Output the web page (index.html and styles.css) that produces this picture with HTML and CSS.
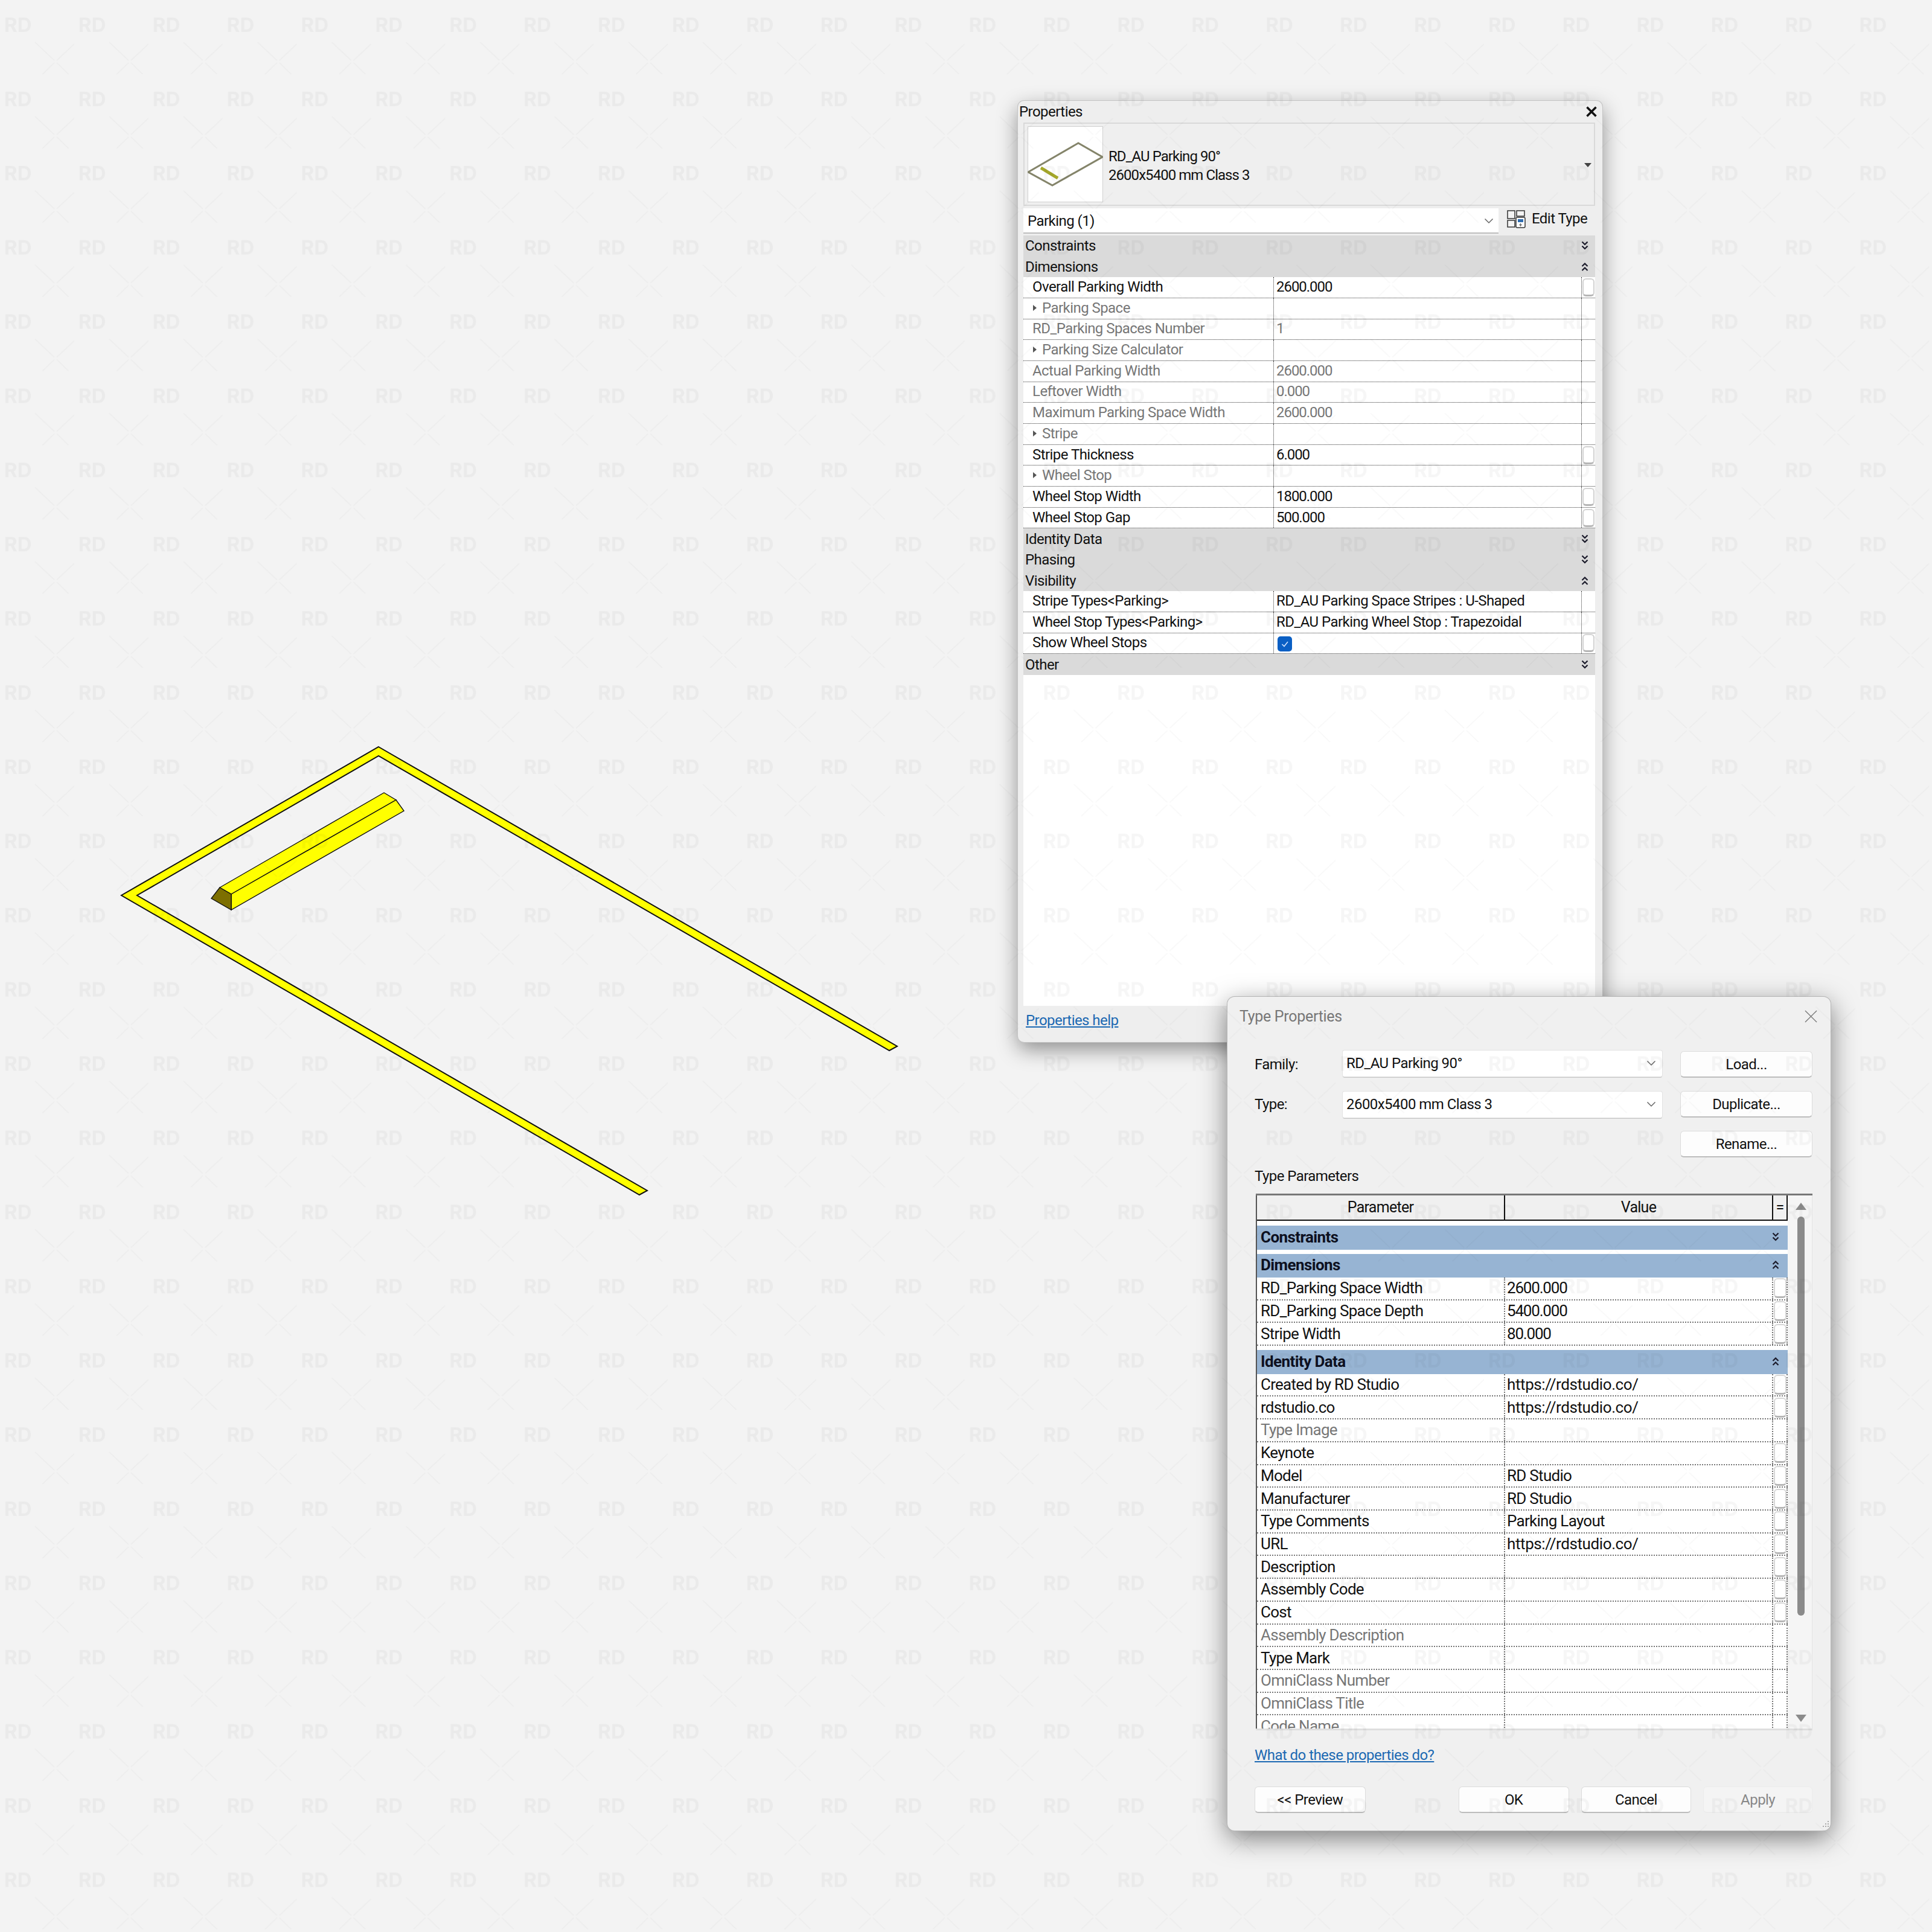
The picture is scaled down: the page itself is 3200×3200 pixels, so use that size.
FILE: index.html
```html
<!DOCTYPE html>
<html lang="en">
<head>
<meta charset="utf-8">
<title>Type Properties</title>
<link rel="stylesheet" href="styles.css">
</head>
<body>
<svg class="defs" width="0" height="0" aria-hidden="true">
  <defs>
    <symbol id="chev-down" viewBox="0 0 12 16"><path d="M1.500 1.500 6 6l4.500-4.500M1.500 8.500 6 13l4.500-4.500" fill="none" stroke="#1a1a2a" stroke-width="2.200"/></symbol>
    <symbol id="chev-up" viewBox="0 0 12 16"><path d="M1.500 7 6 2.500 10.500 7M1.500 14 6 9.500l4.500 4.500" fill="none" stroke="#1a1a2a" stroke-width="2.200"/></symbol>
    <symbol id="combo-arrow" viewBox="0 0 16 10"><path d="M1.500 1.500 8 8l6.500-6.500" fill="none" stroke="#666" stroke-width="1.500"/></symbol>
  </defs>
</svg>

<main class="desktop">
  <svg class="drawing" viewBox="0 0 3200 3200" width="3200" height="3200" aria-hidden="true">
    <polygon class="paint" points="627,1237 1486,1733 1473,1740 627,1252 227,1483 1072,1972 1059,1979 201,1483"/>
    <polygon class="paint thin" points="364,1470 636,1313 656,1325 383,1481"/>
    <polygon class="paint thin" points="383,1481 656,1325 669,1343 383,1507"/>
    <polygon class="paint-end" points="364,1470 383,1481 383,1507 350,1488"/>
  </svg>

  <section class="props">
    <header class="props-title"><span>Properties</span>
      <svg class="props-close" viewBox="0 0 16 16"><path d="M2 2l12 12M14 2 2 14" stroke="#111" stroke-width="2.800" fill="none"/></svg>
    </header>
    <div class="selector">
      <div class="thumb">
        <svg viewBox="0 0 125 126" width="125" height="126">
          <polygon points="1,76 84,28 124,51 41,98" fill="none" stroke="#84846a" stroke-width="3"/>
          <line x1="22" y1="69" x2="50" y2="86" stroke="#a5a82a" stroke-width="5"/>
        </svg>
      </div>
      <div class="selector-name"><span>RD_AU Parking 90°</span><span>2600x5400 mm Class 3</span></div>
      <i class="selector-arrow"></i>
    </div>
    <div class="instance-row">
      <div class="instance-combo"><span>Parking (1)</span><svg class="combo-icon"><use href="#combo-arrow"/></svg></div>
      <div class="edit-type">
        <svg class="edit-icon" viewBox="0 0 31 31">
          <path d="M1 2h12v13H1zM1 18h12v11H1zM16 2h13v9H16z" fill="#f4f4f4" stroke="#333" stroke-width="1.500"/>
          <rect x="15" y="13" width="15" height="17" rx="2" fill="#fff" stroke="#333" stroke-width="1.500"/>
          <rect x="18" y="16" width="9" height="5" fill="#2f6db0"/>
          <path d="M20 25.500h5M22.500 23v5" stroke="#555" stroke-width="1.200"/>
        </svg>
        <span>Edit Type</span>
      </div>
    </div>
    <div class="ptable">
      <div class="phead"><span>Constraints</span><svg class="chev"><use href="#chev-down"/></svg></div>
      <div class="phead"><span>Dimensions</span><svg class="chev"><use href="#chev-up"/></svg></div>
      <div class="prow"><div class="pl">Overall Parking Width</div><div class="pv num">2600.000</div><div class="pb"><i class="pbtn"></i></div></div>
      <div class="prow dim"><div class="pl"><i class="tri"></i>Parking Space</div><div class="pv"></div><div class="pb"></div></div>
      <div class="prow dim"><div class="pl">RD_Parking Spaces Number</div><div class="pv num">1</div><div class="pb"></div></div>
      <div class="prow dim"><div class="pl"><i class="tri"></i>Parking Size Calculator</div><div class="pv"></div><div class="pb"></div></div>
      <div class="prow dim"><div class="pl">Actual Parking Width</div><div class="pv num">2600.000</div><div class="pb"></div></div>
      <div class="prow dim"><div class="pl">Leftover Width</div><div class="pv num">0.000</div><div class="pb"></div></div>
      <div class="prow dim"><div class="pl">Maximum Parking Space Width</div><div class="pv num">2600.000</div><div class="pb"></div></div>
      <div class="prow dim"><div class="pl"><i class="tri"></i>Stripe</div><div class="pv"></div><div class="pb"></div></div>
      <div class="prow"><div class="pl">Stripe Thickness</div><div class="pv num">6.000</div><div class="pb"><i class="pbtn"></i></div></div>
      <div class="prow dim"><div class="pl"><i class="tri"></i>Wheel Stop</div><div class="pv"></div><div class="pb"></div></div>
      <div class="prow"><div class="pl">Wheel Stop Width</div><div class="pv num">1800.000</div><div class="pb"><i class="pbtn"></i></div></div>
      <div class="prow"><div class="pl">Wheel Stop Gap</div><div class="pv num">500.000</div><div class="pb"><i class="pbtn"></i></div></div>
      <div class="phead"><span>Identity Data</span><svg class="chev"><use href="#chev-down"/></svg></div>
      <div class="phead"><span>Phasing</span><svg class="chev"><use href="#chev-down"/></svg></div>
      <div class="phead"><span>Visibility</span><svg class="chev"><use href="#chev-up"/></svg></div>
      <div class="prow"><div class="pl">Stripe Types&lt;Parking&gt;</div><div class="pv">RD_AU Parking Space Stripes : U-Shaped</div><div class="pb"></div></div>
      <div class="prow"><div class="pl">Wheel Stop Types&lt;Parking&gt;</div><div class="pv">RD_AU Parking Wheel Stop : Trapezoidal</div><div class="pb"></div></div>
      <div class="prow"><div class="pl">Show Wheel Stops</div><div class="pv"><i class="check"><svg viewBox="0 0 24 25" width="24" height="25"><path d="M7.500 13l3.500 3.500 6-7.500" fill="none" stroke="#cfe3ff" stroke-width="1.600"/></svg></i></div><div class="pb"><i class="pbtn"></i></div></div>
      <div class="phead"><span>Other</span><svg class="chev"><use href="#chev-down"/></svg></div>
    </div>
    <div class="props-fill"></div>
    <footer class="props-foot"><a class="link">Properties help</a></footer>
  </section>

  <section class="dialog">
    <header class="dlg-title"><span>Type Properties</span>
      <svg class="dlg-close" viewBox="0 0 22 22"><path d="M1 1l20 20M21 1 1 21" stroke="#777" stroke-width="1.400" fill="none"/></svg>
    </header>
    <div class="dlg-body">
      <div class="dlg-form">
        <label class="dlg-label">Family:</label>
        <div class="combo combo-first"><span>RD_AU Parking 90°</span><svg class="combo-icon"><use href="#combo-arrow"/></svg></div>
        <button class="btn">Load...</button>
        <label class="dlg-label">Type:</label>
        <div class="combo"><span>2600x5400 mm Class 3</span><svg class="combo-icon"><use href="#combo-arrow"/></svg></div>
        <button class="btn">Duplicate...</button>
        <button class="btn btn-third">Rename...</button>
      </div>
      <div class="dlg-section">Type Parameters</div>
      <div class="ttable">
        <div class="tgrid">
          <div class="thead"><div>Parameter</div><div>Value</div><div>=</div></div>
          <div class="tgroup g-first"><span>Constraints</span><svg class="chev"><use href="#chev-down"/></svg></div>
          <div class="tgroup g-next"><span>Dimensions</span><svg class="chev"><use href="#chev-up"/></svg></div>
          <div class="trow"><div>RD_Parking Space Width</div><div class="num">2600.000</div><div><i class="tbtn"></i></div></div>
          <div class="trow"><div>RD_Parking Space Depth</div><div class="num">5400.000</div><div><i class="tbtn"></i></div></div>
          <div class="trow"><div>Stripe Width</div><div class="num">80.000</div><div><i class="tbtn"></i></div></div>
          <div class="tgroup g-next"><span>Identity Data</span><svg class="chev"><use href="#chev-up"/></svg></div>
          <div class="trow"><div>Created by RD Studio</div><div class="url">https://rdstudio.co/</div><div><i class="tbtn"></i></div></div>
          <div class="trow"><div>rdstudio.co</div><div class="url">https://rdstudio.co/</div><div><i class="tbtn"></i></div></div>
          <div class="trow dim"><div>Type Image</div><div></div><div></div></div>
          <div class="trow"><div>Keynote</div><div></div><div><i class="tbtn"></i></div></div>
          <div class="trow"><div>Model</div><div>RD Studio</div><div><i class="tbtn"></i></div></div>
          <div class="trow"><div>Manufacturer</div><div>RD Studio</div><div><i class="tbtn"></i></div></div>
          <div class="trow"><div>Type Comments</div><div>Parking Layout</div><div><i class="tbtn"></i></div></div>
          <div class="trow"><div>URL</div><div class="url">https://rdstudio.co/</div><div><i class="tbtn"></i></div></div>
          <div class="trow"><div>Description</div><div></div><div><i class="tbtn"></i></div></div>
          <div class="trow"><div>Assembly Code</div><div></div><div><i class="tbtn"></i></div></div>
          <div class="trow"><div>Cost</div><div></div><div><i class="tbtn"></i></div></div>
          <div class="trow dim"><div>Assembly Description</div><div></div><div></div></div>
          <div class="trow"><div>Type Mark</div><div></div><div></div></div>
          <div class="trow dim"><div>OmniClass Number</div><div></div><div></div></div>
          <div class="trow dim"><div>OmniClass Title</div><div></div><div></div></div>
          <div class="trow dim"><div>Code Name</div><div></div><div></div></div>
        </div>
        <div class="tscroll">
          <i class="arrow-up"></i>
          <i class="thumb-bar"></i>
          <i class="arrow-down"></i>
        </div>
      </div>
      <a class="link dlg-link">What do these properties do?</a>
      <div class="dlg-actions">
        <button class="btn btn-preview">&lt;&lt; Preview</button>
        <button class="btn btn-foot">OK</button>
        <button class="btn btn-foot">Cancel</button>
        <button class="btn btn-foot btn-off">Apply</button>
      </div>
    </div>
    <svg class="grip" viewBox="0 0 14 14"><path d="M11 1h2v2h-2zM7 5h2v2H7zM11 5h2v2h-2zM3 9h2v2H3zM7 9h2v2H7zM11 9h2v2h-2z" fill="#aaa"/></svg>
  </section>

  <svg class="watermark" width="3200" height="3200" aria-hidden="true">
    <defs>
      <pattern id="wm" width="122.900" height="122.900" patternUnits="userSpaceOnUse">
        <text x="7" y="53" class="wm-text">RD</text>
        <path d="M58 70 90 100M94 104l32 31M58 135l32-31M94 100l32-30" class="wm-line"/>
      </pattern>
    </defs>
    <rect width="3200" height="3200" fill="url(#wm)"/>
  </svg>
</main>
</body>
</html>
```
FILE: styles.css
```css
* { box-sizing: border-box; }
html, body { margin: 0; padding: 0; }
body {
  background: #f3f3f3;
  font-family: Roboto, "Noto Sans", "Liberation Sans", sans-serif;
  color: #111;
}
.defs { position: absolute; }
.desktop { position: relative; width: 3200px; height: 3200px; overflow: hidden; background: #f3f3f3; }

/* free canvas */
.drawing { position: absolute; left: 0; top: 0; }
.paint { fill: #ffff00; stroke: #111; stroke-width: 2; stroke-linejoin: miter; }
.paint.thin { stroke-width: 1.400; }
.paint-end { fill: #7d6f00; stroke: #111; stroke-width: 1.400; }
.watermark { position: absolute; left: 0; top: 0; pointer-events: none; }
.wm-text { font-family: Inter, Roboto, sans-serif; font-weight: 700; font-size: 33px; fill: #000; fill-opacity: .035; }
.wm-line { stroke: #000; stroke-opacity: .028; stroke-width: 1.500; fill: none; }

/* Properties palette */
.props {
  position: absolute; left: 1686px; top: 167px; width: 968px; height: 1559px;
  display: flex; flex-direction: column; padding: 0 12px 0 9px;
  background: #eeeeee; border-radius: 10px;
  box-shadow: 0 0 0 1px #c4c4c4, 0 12px 34px rgba(0,0,0,.42);
  font-size: 24px; letter-spacing: -.55px;
}
.props-title { height: 36px; display: flex; align-items: center; justify-content: space-between; margin: 0 -9px 0 -9px; padding: 0 5px 0 2px; }
.props-close { width: 20px; height: 20px; }
.selector {
  height: 138px; display: flex; align-items: center; position: relative;
  background: #efefef; border: 2px solid #d9d9d9; padding-left: 5px;
}
.thumb { width: 125px; height: 126px; background: #fff; border: 1px solid #d0d0d0; flex: none; }
.thumb svg { display: block; margin: -1px; }
.selector-name { display: flex; flex-direction: column; margin-left: 9px; line-height: 31px; margin-top: 6px; letter-spacing: -.95px; }
.selector-arrow { position: absolute; right: 4px; top: 65px; width: 0; height: 0; border: 6px solid transparent; border-top: 7px solid #444; border-bottom: 0; }
.instance-row { display: flex; margin-top: 4px; height: 44px; }
.instance-combo {
  width: 787px; height: 42px; background: #fff; border-bottom: 2px solid #bdbdbd;
  display: flex; align-items: center; justify-content: space-between; padding: 2px 8px 0 7px;
}
.combo-icon { width: 16px; height: 10px; flex: none; }
.edit-type { display: flex; align-items: flex-start; margin-left: 14px; }
.edit-icon { width: 31px; height: 31px; margin-top: 2px; }
.edit-type span { margin-left: 10px; line-height: 34px; }
.ptable { margin-top: 1px; }
.phead {
  height: 34.600px; background: #dadada; display: flex; align-items: center; justify-content: space-between;
  padding: 0 11px 0 3px;
}
.chev { width: 12px; height: 16px; flex: none; }
.prow {
  height: 34.700px; display: grid; grid-template-columns: 414px 510px 22px;
  background: #fff; border-bottom: 1px dotted #333;
}
.prow > div { display: flex; align-items: center; min-width: 0; white-space: nowrap; padding-bottom: 2px; }
.pl { padding-left: 15px; }
.pv, .pb { border-left: 1px dotted #333; }
.pv { padding-left: 4px; }
.num { letter-spacing: -1.05px; }
.dim { color: #777; }
.tri { width: 0; height: 0; border: 5px solid transparent; border-left: 6px solid #555; border-right: 0; margin-right: 9px; margin-left: 1px; }
.pbtn { width: 20px; height: 30px; margin-left: 1px; background: #fff; border: 2px solid #d2d2d2; border-bottom: 3px solid #b5b5b5; border-radius: 6px; }
.pb { padding-bottom: 0 !important; }
.check { width: 24px; height: 25px; background: #0a5fc4; border-radius: 5px; display: block; margin-left: 2px; margin-top: 5px; }
.check svg { display: block; }
.props-fill { flex: 1; background: #fff; }
.props-foot { height: 60px; display: flex; align-items: flex-start; padding: 10px 0 0 4px; }
.link { color: #1c69b3; text-decoration: underline; }

/* Type Properties dialog */
.dialog {
  position: absolute; left: 2033px; top: 1651px; width: 999px; height: 1381px;
  background: #f0f0f0; border-radius: 12px;
  box-shadow: 0 0 0 1px #b5b5b5, 0 12px 44px rgba(0,0,0,.5);
  font-size: 24px; letter-spacing: -.55px;
}
.dlg-title { height: 64px; display: flex; align-items: center; justify-content: space-between; padding: 0 22px 0 20px; color: #777; margin-bottom: 26px; font-size: 25px; letter-spacing: -.3px; }
.dlg-close { width: 21px; height: 21px; }
.dlg-body { padding: 0 30px 0 45px; }
.dlg-form { display: grid; grid-template-columns: 146px 559px 219px; grid-auto-rows: 44px; row-gap: 22px; align-items: center; }
.dlg-label { display: block; }
.combo {
  width: 529px; height: 43px; background: #fff; border-radius: 3px;
  box-shadow: 0 0 0 1px #e2e2e2, 0 2px 0 #c5c5c5;
  display: flex; align-items: center; justify-content: space-between; padding: 0 10px 0 6px;
}
.combo-first { margin-top: -4px; }
.btn {
  font: inherit; letter-spacing: inherit; color: #111; background: #fdfdfd; padding: 0;
  border: 1px solid #dcdcdc; border-bottom: 2px solid #bdbdbd; border-radius: 6px; height: 44px; width: 219px;
}
.btn-third { grid-column: 3; }
.dlg-section { height: 34px; line-height: 34px; margin-top: 14px; }
.ttable {
  margin: 12px 0 0 2px; height: 889px; display: flex;
  border-top: 3px solid #777; border-bottom: 3px solid #dedede;
}
.tgrid { width: 881px; height: 883px; overflow: hidden; background: #fff; border-left: 2px solid #555; font-size: 26px; letter-spacing: -.72px; flex: none; }
.thead { height: 42px; display: grid; grid-template-columns: 409px 444px 26px; background: #f0f0f0; border-bottom: 2px solid #111; font-size: 25px; text-align: center; line-height: 40px; }
.thead > div + div { border-left: 2px solid #111; }
.thead > div:last-child { border-right: 2px solid #111; }
.tgroup { height: 39.500px; background: #97b4d3; display: flex; align-items: center; justify-content: space-between; padding: 0 14px 2px 6px; font-weight: 700; font-size: 26px; letter-spacing: -.6px; color: #0d1020; }
.g-first { margin-top: 8px; }
.g-next { margin-top: 7px; }
.trow { height: 37.720px; display: grid; grid-template-columns: 409px 444px 26px; border-bottom: 2px dotted #777; white-space: nowrap; }
.trow > div { display: flex; align-items: center; min-width: 0; padding-left: 6px; padding-bottom: 1px; }
.trow > div + div { border-left: 2px dotted #777; padding-left: 3px; }
.trow > .num { letter-spacing: -1.2px; }
.trow > .url { letter-spacing: -.4px; }
.trow > div:last-child { padding-left: 1px; padding-bottom: 0; border-right: 2px dotted #777; }
.trow.dim { color: #777; }
.tbtn { width: 21px; height: 33px; background: #fff; border: 2px solid #d6d6d6; border-bottom: 3px solid #b5b5b5; border-radius: 6px; }
.tscroll { flex: 1; background: #f5f5f5; position: relative; display: flex; flex-direction: column; align-items: center; padding-left: 3px; border-right: 1px solid #e4e4e4; }
.arrow-up { width: 0; height: 0; margin-top: 12px; border: 9px solid transparent; border-top: 0; border-bottom: 12px solid #8b8b8b; }
.thumb-bar { width: 12px; height: 661px; margin-top: 11px; background: #8b8b8b; border-radius: 6px; }
.arrow-down { position: absolute; top: 860px; left: 13px; width: 0; height: 0; border: 9px solid transparent; border-bottom: 0; border-top: 12px solid #8b8b8b; }
.dlg-link { display: block; height: 30px; line-height: 30px; margin-top: 26px; }
.dlg-actions { display: flex; margin-top: 37px; }
.btn-preview { width: 184px; margin-right: 154px; }
.btn-foot { width: 183px; margin-right: 20px; }
.btn-foot:last-child { margin-right: 0; width: 181px; }
.btn-off { color: #888; background: #f4f4f4; border-color: #ececec; }
.grip { position: absolute; right: 2px; bottom: 3px; width: 14px; height: 14px; }
```
